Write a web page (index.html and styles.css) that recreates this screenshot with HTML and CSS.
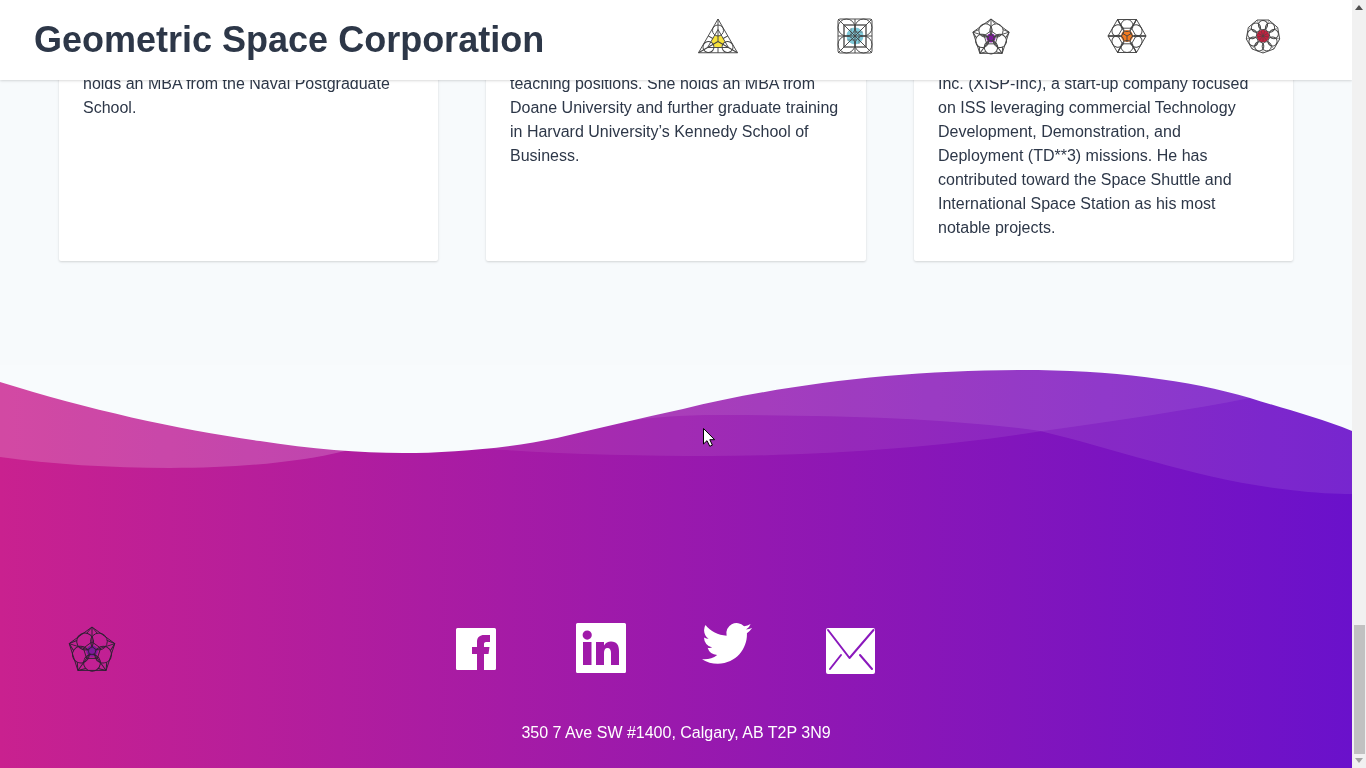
FILE: index.html
```html
<!DOCTYPE html>
<html lang="en">
<head>
<meta charset="utf-8">
<title>Geometric Space Corporation</title>
<link rel="stylesheet" href="styles.css">
</head>
<body>
<div class="window">
  <div class="viewport">
    <header class="topbar">
      <h1 class="brand">Geometric Space Corporation</h1>
      <nav class="team-icons">
        <svg class="geo" viewBox="-20 -20 40 40">
          <g transform="translate(-1 5.5)">
            <circle class="core core-yellow" r="6.3"/>
            <polygon points="0,-22.5 19.5,11.25 -19.5,11.25"/>
            <polygon points="0,-12 10.4,6 -10.4,6"/>
            <g id="tri-petal">
              <line x1="0" y1="-22.5" x2="0" y2="0"/>
              <circle cx="0" cy="-11" r="5.5"/>
              <line x1="0" y1="11.25" x2="0" y2="6"/>
            </g>
            <use href="#tri-petal" transform="rotate(120)"/>
            <use href="#tri-petal" transform="rotate(240)"/>
          </g>
        </svg>
        <svg class="geo" viewBox="-20 -20 40 40">
          <circle class="core core-teal" r="8.5"/>
          <rect x="-17" y="-17" width="34" height="34" rx="2"/>
          <rect class="heavy" x="-11" y="-11" width="22" height="22"/>
          <g id="sq-petal">
            <circle cx="-8.5" cy="-8.5" r="8.5"/>
            <line x1="-17" y1="-17" x2="0" y2="0"/>
            <line x1="0" y1="-17" x2="0" y2="0"/>
            <line class="fine" x1="-4" y1="-8" x2="-4" y2="0"/>
          </g>
          <use href="#sq-petal" transform="rotate(90)"/>
          <use href="#sq-petal" transform="rotate(180)"/>
          <use href="#sq-petal" transform="rotate(270)"/>
        </svg>
        <svg class="geo" viewBox="-20 -22 40 40">
          <g transform="scale(0.38)" class="thick">
            <use href="#pent"/>
          </g>
        </svg>
        <svg class="geo" viewBox="-20 -20 40 40">
          <circle class="core core-orange" r="6"/>
          <polygon points="-19,0 -9.5,-16.5 9.5,-16.5 19,0 9.5,16.5 -9.5,16.5"/>
          <polygon points="-9,0 -4.5,-7.8 4.5,-7.8 9,0 4.5,7.8 -4.5,7.8"/>
          <path d="M0 0 V6 M0 0 L-5 -3 M0 0 L5 -3"/>
          <g id="hex-petal">
            <circle cx="0" cy="-10.5" r="6"/>
            <line x1="-19" y1="0" x2="-9" y2="0"/>
            <line x1="-9.5" y1="-16.5" x2="-4.5" y2="-7.8"/>
            <line x1="9.5" y1="-16.5" x2="4.5" y2="-7.8"/>
          </g>
          <use href="#hex-petal" transform="rotate(60)"/>
          <use href="#hex-petal" transform="rotate(120)"/>
          <use href="#hex-petal" transform="rotate(180)"/>
          <use href="#hex-petal" transform="rotate(240)"/>
          <use href="#hex-petal" transform="rotate(300)"/>
        </svg>
        <svg class="geo" viewBox="-20 -20 40 40">
          <circle class="core core-red" r="6.3"/>
          <polygon points="0,17 10.9,13 16.7,3 14.7,-8.5 5.8,-16 -5.8,-16 -14.7,-8.5 -16.7,3 -10.9,13"/>
          <g id="non-petal">
            <circle cx="3.76" cy="10.3" r="4.6"/>
            <line class="fine" x1="0" y1="17" x2="0" y2="0"/>
          </g>
          <use href="#non-petal" transform="rotate(40)"/>
          <use href="#non-petal" transform="rotate(80)"/>
          <use href="#non-petal" transform="rotate(120)"/>
          <use href="#non-petal" transform="rotate(160)"/>
          <use href="#non-petal" transform="rotate(200)"/>
          <use href="#non-petal" transform="rotate(240)"/>
          <use href="#non-petal" transform="rotate(280)"/>
          <use href="#non-petal" transform="rotate(320)"/>
        </svg>
      </nav>
    </header>

    <section class="cards">
      <article class="card">
        <p>holds an MBA from the Naval Postgraduate School.</p>
      </article>
      <article class="card">
        <p>teaching positions. She holds an MBA from Doane University and further graduate training in Harvard University’s Kennedy School of Business.</p>
      </article>
      <article class="card">
        <p>Inc. (XISP-Inc), a start-up company focused on ISS leveraging commercial Technology Development, Demonstration, and Deployment (TD**3) missions. He has contributed toward the Space Shuttle and International Space Station as his most notable projects.</p>
      </article>
    </section>

    <footer class="footer">
      <svg class="wave" viewBox="0 365 1352 135" preserveAspectRatio="none">
        <path class="layer-a" d="M0 457 C50 464 110 468 170 468 C240 468 300 462 345 451 L345 360 L0 360 Z"/>
        <path class="layer-x" d="M345 451 L400 448 L490 449 C560 454 640 456 710 456 C830 456 950 446 1043 431 C1120 420 1190 410 1250 398 L1250 360 L345 360 Z"/>
        <path class="layer-y" d="M557 438 C600 425 640 415 720 415 C830 415 950 418 1040 431 C1120 450 1200 480 1290 490 C1315 493 1335 494 1352 494 L1352 360 L557 360 Z"/>
        <path class="sky" d="M0 382 C90 410 180 430 260 441 C310 449 360 453 403 453 C450 453 510 448 557 438 C600 428 640 418 683 409 C780 385 900 370 1022 370 C1110 370 1190 380 1250 398 C1285 409 1320 418 1352 431 L1352 360 L0 360 Z"/>
      </svg>
      <div class="footer-row">
        <svg class="footer-logo" viewBox="-50 -50 100 100">
          <defs>
            <g id="pent">
              <circle class="core core-purple" r="12"/>
              <polygon points="0,-50 47.55,-15.45 29.39,40.45 -29.39,40.45 -47.55,-15.45"/>
              <polygon points="0,-19 18,-5.9 11.2,15.4 -11.2,15.4 -18,-5.9"/>
              <g id="pent-petal">
                <circle cx="14.4" cy="-19.8" r="17.5"/>
                <line x1="0" y1="-50" x2="0" y2="-6"/>
                <line x1="0" y1="-50" x2="-11" y2="-37"/>
                <line x1="0" y1="-50" x2="11" y2="-37"/>
              </g>
              <use href="#pent-petal" transform="rotate(72)"/>
              <use href="#pent-petal" transform="rotate(144)"/>
              <use href="#pent-petal" transform="rotate(216)"/>
              <use href="#pent-petal" transform="rotate(288)"/>
            </g>
          </defs>
          <use href="#pent"/>
        </svg>
        <div class="socials">
          <svg class="ico" viewBox="0 0 50 50" aria-label="Facebook">
            <path fill-rule="evenodd" d="M6.5 5 H43.5 A1.5 1.5 0 0 1 45 6.5 V45.5 A1.5 1.5 0 0 1 43.5 47 H33 V31 H37.5 L38.5 24 H33 V21 C33 20 33.5 19 35 19 H39 V12 H33 C29 12 26 14 26 19 V24 H21 V31 H26 V47 H6.5 A1.5 1.5 0 0 1 5 45.5 V6.5 A1.5 1.5 0 0 1 6.5 5 Z"/>
          </svg>
          <svg class="ico" viewBox="0 0 50 50" aria-label="LinkedIn">
            <path fill-rule="evenodd" d="M1.5 0 H48.5 A1.5 1.5 0 0 1 50 1.5 V48.5 A1.5 1.5 0 0 1 48.5 50 H1.5 A1.5 1.5 0 0 1 0 48.5 V1.5 A1.5 1.5 0 0 1 1.5 0 Z M7 19 V42 H15.5 V19 Z M11.2 7.5 A4.6 4.6 0 1 0 11.2 16.7 A4.6 4.6 0 1 0 11.2 7.5 Z M20 19 V42 H28 V30 C28 27 29 25 31.5 25 C34 25 35 27 35 30 V42 H43 V28 C43 22.5 41 18.5 35 18.5 C32 18.5 29.5 20 28 22.5 V19 Z"/>
          </svg>
          <svg class="ico" viewBox="-0.5 2.2 24 24" aria-label="Twitter">
            <path d="M23.953 4.57a10 10 0 01-2.825.775 4.958 4.958 0 002.163-2.723c-.951.555-2.005.959-3.127 1.184a4.92 4.92 0 00-8.384 4.482C7.69 8.095 4.067 6.13 1.64 3.162a4.822 4.822 0 00-.666 2.475c0 1.71.87 3.213 2.188 4.096a4.904 4.904 0 01-2.228-.616v.06a4.923 4.923 0 003.946 4.827 4.996 4.996 0 01-2.212.085 4.936 4.936 0 004.604 3.417 9.867 9.867 0 01-6.102 2.105c-.39 0-.779-.023-1.17-.067a13.995 13.995 0 007.557 2.209c9.053 0 13.998-7.496 13.998-13.985 0-.21 0-.42-.015-.63A9.935 9.935 0 0024 4.59z"/>
          </svg>
          <svg class="ico" viewBox="0 0 50 50" aria-label="Email">
            <rect x="0" y="5" width="49" height="46" rx="2"/>
            <path class="mail-line" d="M2 7 L23.5 35 L47.5 7 M4 46 L15 32 M46 46 L34 32"/>
          </svg>
        </div>
      </div>
      <p class="address">350 7 Ave SW #1400, Calgary, AB T2P 3N9</p>
    </footer>

    <svg class="cursor" viewBox="0 0 13 19" aria-hidden="true">
      <path d="M0.5 0.5 V16 L4 12.7 L6.8 18.3 L9.4 17.1 L6.8 11.7 H11.6 Z"/>
    </svg>
  </div>
  <div class="scrollbar">
    <span class="arrow arrow-up"></span>
    <span class="thumb"></span>
    <span class="arrow arrow-down"></span>
  </div>
</div>
</body>
</html>
```
FILE: styles.css
```css
* { box-sizing: border-box; }
html, body { margin: 0; padding: 0; }
body {
  width: 1366px;
  height: 768px;
  overflow: hidden;
  font-family: "Liberation Sans", Arial, sans-serif;
  font-size: 16px;
  line-height: 24px;
  color: #2d3748;
}
.window { display: flex; height: 768px; }
.viewport {
  position: relative;
  width: 1352px;
  height: 768px;
  padding-top: 48px;
  background: #f7fafc;
  overflow: hidden;
}

/* Header */
.topbar {
  position: absolute;
  top: 0; left: 0; right: 0;
  height: 80px;
  z-index: 2;
  display: flex;
  justify-content: space-between;
  background: #fff;
  box-shadow: 0 1px 3px rgba(0,0,0,.1), 0 1px 2px rgba(0,0,0,.06);
  padding: 0 69px 0 34px;
}
.brand {
  margin: 0;
  font-size: 36px;
  line-height: 80px;
  height: 80px;
  font-weight: 700;
  color: #2d3748;
  will-change: transform;
}
.team-icons { display: flex; gap: 96px; padding-top: 16px; }
.geo {
  width: 40px;
  height: 40px;
  overflow: visible;
  fill: none;
  stroke: #444;
  stroke-width: .95;
}
.thick { stroke-width: 2.5; }
.heavy { stroke-width: 1.3; }
.fine { stroke-width: .5; }
.core { stroke: none; }
.core-yellow { fill: #f7e23b; }
.core-teal { fill: #7fc9d9; }
.core-purple { fill: #7d1a9c; }
.core-orange { fill: #f47a1f; }
.core-red { fill: #c3203f; }

/* Cards */
.cards {
  display: grid;
  grid-template-columns: repeat(3, 1fr);
  gap: 48px;
  padding: 0 59px;
  margin-bottom: 104px;
}
.card {
  background: #fff;
  padding: 24px 24px 21px;
  box-shadow: 0 1px 3px rgba(0,0,0,.1), 0 1px 2px rgba(0,0,0,.06);
  border-radius: 2px;
}
.card p { margin: 0; will-change: transform; }

/* Footer */
.footer {
  height: 403px;
  background: linear-gradient(90deg, #c9218f, #6a11cb);
  color: #fff;
}
.wave { display: block; width: 1352px; height: 135px; }
.layer-a { fill: #fff; fill-opacity: .18; }
.layer-x { fill: #fff; fill-opacity: .08; }
.layer-y { fill: #fff; fill-opacity: .09; }
.sky { fill: #f8fbfd; }
.footer-row {
  display: flex;
  padding: 123px 0 0 68px;
}
.footer-logo {
  width: 48px;
  height: 48px;
  margin-top: 3.5px;
  overflow: visible;
  fill: none;
  stroke: #2f2033;
  stroke-width: 2;
}
.socials { display: flex; gap: 75px; margin-left: 335px; }
.ico { width: 50px; height: 50px; fill: #fff; overflow: visible; display: block; }
.mail-line {
  fill: none;
  stroke: #8a18bc;
  stroke-width: 2;
  stroke-linecap: round;
  stroke-linejoin: round;
}
.address { margin: 46px 0 0; text-align: center; will-change: transform; }

/* Pointer */
.cursor {
  position: absolute;
  left: 703px;
  top: 428px;
  width: 13px;
  height: 19px;
  fill: #fff;
  stroke: #000;
  stroke-width: 1;
}

/* Scrollbar */
.scrollbar {
  width: 14px;
  height: 768px;
  background: #f1f1f1;
  display: flex;
  flex-direction: column;
  align-items: center;
  padding: 5px 0;
}
.arrow { width: 0; height: 0; border-left: 4px solid transparent; border-right: 4px solid transparent; }
.arrow-up { border-bottom: 5px solid #505050; }
.arrow-down { border-top: 5px solid #a3a3a3; margin-top: 4px; }
.thumb { width: 11px; height: 129px; margin-top: auto; background: #c1c1c1; margin-left: 1px; }
```
